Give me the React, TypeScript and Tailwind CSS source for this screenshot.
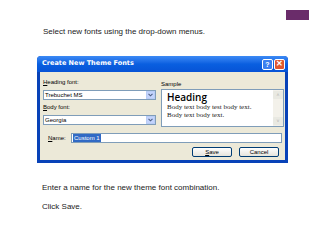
import React from "react";

function Combo({ value }: { value: string }) {
  return (
    <div className="flex h-[10px] w-[113px] items-stretch border border-[#7f9db9] bg-white">
      <span className="flex-1 pl-[1px] text-[6px] leading-[8px] text-black">{value}</span>
      <span className="flex w-[9px] items-center justify-center border border-[#b9cdf5] bg-[#c3d3fd]">
        <svg width="5" height="4" viewBox="0 0 5 4">
          <path d="M0.5 0.8 L2.5 2.8 L4.5 0.8" stroke="#4d6185" strokeWidth="1.1" fill="none" />
        </svg>
      </span>
    </div>
  );
}

function XpButton({ label, u }: { label: string; u: string }) {
  return (
    <div className="flex h-[10px] w-[40px] items-center justify-center rounded-[2px] border border-[#003c74] bg-gradient-to-b from-white to-[#e6e4dc] text-[6px] leading-[8px] text-black">
      <span>
        <span className="underline">{u}</span>
        {label}
      </span>
    </div>
  );
}

function Dialog() {
  return (
    <div className="ml-[37px] mt-[19px] flex h-[107px] w-[251px] flex-col overflow-hidden rounded-t-[4px] bg-[#0842b8]">
      <div className="flex h-[16px] items-center justify-between bg-gradient-to-b from-[#3b8af5] via-[#0a5fe0] to-[#0753d6] pl-[5px] pr-[3px]">
        <span className="text-[6.5px] font-bold text-white [font-family:'DejaVu_Sans',sans-serif]">
          Create New Theme Fonts
        </span>
        <div className="flex gap-[1px]">
          <span className="flex h-[11px] w-[11px] items-center justify-center rounded-[2px] border border-white bg-[#3c7ff0] text-[7px] font-bold leading-none text-white">
            ?
          </span>
          <span className="flex h-[11px] w-[11px] items-center justify-center rounded-[2px] border border-white bg-[#e0572f] text-[8px] font-bold leading-none text-white">
            ✕
          </span>
        </div>
      </div>
      <div className="mx-[3px] mb-[3px] flex flex-1 flex-col bg-[#ece9d8] px-[3px]">
        <div className="flex gap-[5px]">
          <div className="flex flex-col">
            <span className="mt-[6px] h-[8px] text-[6px] leading-[8px] text-black">
              <span className="underline">H</span>eading font:
            </span>
            <div className="mt-[4px]">
              <Combo value="Trebuchet MS" />
            </div>
            <span className="mt-[3px] h-[8px] text-[6px] leading-[8px] text-black">
              <span className="underline">B</span>ody font:
            </span>
            <div className="mt-[4px]">
              <Combo value="Georgia" />
            </div>
          </div>
          <div className="flex flex-col">
            <span className="mt-[8px] h-[8px] text-[6px] leading-[8px] text-black">Sample</span>
            <div className="mt-[1px] flex h-[38px] w-[123px] border border-[#7f9db9] bg-white">
              <div className="flex-1 pl-[5px] pt-[2px]">
                <div className="text-[10px] font-semibold leading-[11px] text-black [font-family:'Open_Sans',sans-serif]">
                  Heading
                </div>
                <div className="text-[7px] leading-[8px] text-[#222] [font-family:'Liberation_Serif',serif]">
                  Body text body test body text.
                  <br />
                  Body text body text.
                </div>
              </div>
              <div className="flex w-[10px] flex-col justify-between bg-[#f3f1ea] py-[1px]">
                <span className="h-[8px] rounded-[1px] bg-[#e9e9e2] text-center text-[5px] leading-[8px] text-[#b0b0b0]">
                  ˄
                </span>
                <span className="h-[8px] rounded-[1px] bg-[#e9e9e2] text-center text-[5px] leading-[8px] text-[#b0b0b0]">
                  ˅
                </span>
              </div>
            </div>
          </div>
        </div>
        <div className="mt-[6px] flex items-center">
          <span className="ml-[5px] w-[23px] text-[6px] leading-[8px] text-black">
            <span className="underline">N</span>ame:
          </span>
          <div className="flex h-[10px] w-[211px] items-center border border-[#7f9db9] bg-white pl-[1px]">
            <span className="bg-[#316ac5] px-[1px] text-[6px] leading-[8px] text-white">Custom 1</span>
          </div>
        </div>
        <div className="mt-[4px] flex justify-end gap-[7px] pr-[3px]">
          <XpButton u="S" label="ave" />
          <XpButton u="" label="Cancel" />
        </div>
      </div>
    </div>
  );
}

export default function App() {
  return (
    <div className="h-[240px] w-[320px] overflow-hidden bg-white [font-family:'Liberation_Sans',Arial,sans-serif]">
      <div className="flex justify-end pr-[11px] pt-[10px]">
        <div className="h-[10px] w-[23px] bg-[#6a2c6a]" />
      </div>
      <p className="ml-[43px] mt-[7px] text-[8px] leading-[10px] text-[#222]">
        Select new fonts using the drop-down menus.
      </p>
      <Dialog />
      <p className="ml-[42px] mt-[20px] text-[8px] leading-[10px] text-[#222]">
        Enter a name for the new theme font combination.
      </p>
      <p className="ml-[42px] mt-[9px] text-[8px] leading-[10px] text-[#222]">Click Save.</p>
    </div>
  );
}
